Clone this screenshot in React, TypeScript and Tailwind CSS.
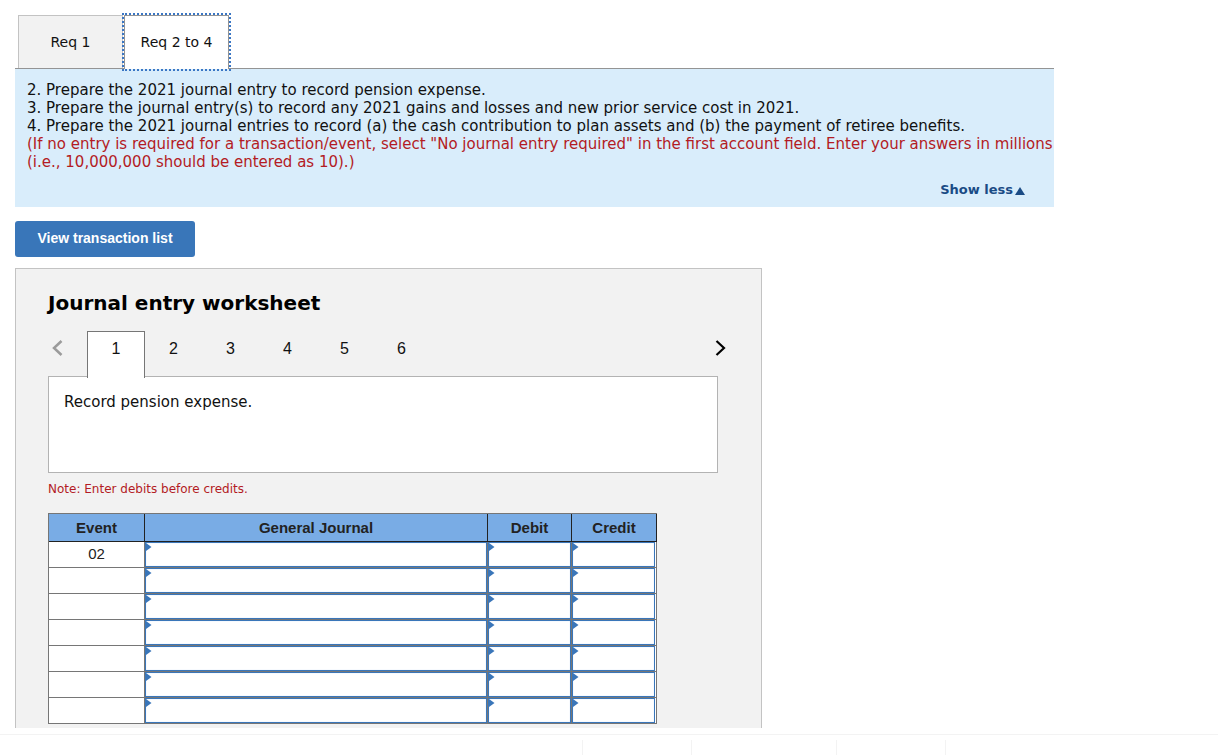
import { useState } from 'react';

const pages = [1, 2, 3, 4, 5, 6];

const rows = [
  { id: 1, event: '02' },
  { id: 2, event: '' },
  { id: 3, event: '' },
  { id: 4, event: '' },
  { id: 5, event: '' },
  { id: 6, event: '' },
  { id: 7, event: '' }
];

const EntryCell = ({ label }: { label: string }) => (
  <td className="relative border-r border-b border-[#767676] p-0 last:pr-px">
    <input
      type="text"
      aria-label={label}
      className="block h-[25px] w-full border border-[#3a76b9] bg-white px-2 text-sm outline-none shadow-[inset_0_0_1px_#a9cbee]"
    />
    <svg className="absolute left-0 top-px h-2 w-[7px]" viewBox="0 0 7 8" aria-hidden="true">
      <path d="M0 0H1L6.5 4L1 8H0Z" fill="#3a76b9" />
    </svg>
  </td>
);

const ReqTabs = () => (
  <div className="flex border-b border-[#949494] pl-[3px] pt-[15px]">
    <button
      type="button"
      className="h-[53px] w-[105px] border border-b-0 border-[#c3c3c3] bg-[#f2f2f2] text-sm"
    >
      Req 1
    </button>
    <button
      type="button"
      className="relative ml-px -mb-px h-[54px] w-[105px] border border-b-0 border-[#949494] bg-white pb-0.5 text-sm outline-2 outline-dotted outline-[#3a76c4]"
    >
      Req 2 to 4
    </button>
  </div>
);

const Instructions = () => (
  <div className="bg-[#d9edfb] pl-3 pt-3 pb-2 text-[15px] leading-[18px]">
    <p>2. Prepare the 2021 journal entry to record pension expense.</p>
    <p>3. Prepare the journal entry(s) to record any 2021 gains and losses and new prior service cost in 2021.</p>
    <p>
      4. Prepare the 2021 journal entries to record (a) the cash contribution to plan assets and (b) the payment of
      retiree benefits.
    </p>
    <p className="text-[#b31b24]">
      (If no entry is required for a transaction/event, select "No journal entry required" in the first account field.
      Enter your answers in millions (i.e., 10,000,000 should be entered as 10).)
    </p>
    <div className="mt-2.5 flex justify-end pr-[29px]">
      <button type="button" className="flex items-center gap-0.5 text-[13px] font-bold text-[#1a4b85]">
        Show less
        <svg className="mt-0.5 h-2 w-2.5" viewBox="0 0 10 8" aria-hidden="true">
          <path d="M5 0L10 8H0Z" fill="currentColor" />
        </svg>
      </button>
    </div>
  </div>
);

const Worksheet = () => {
  const [page, setPage] = useState(1);

  return (
    <section className="mt-[11px] max-w-[747px] border border-b-0 border-[#c3c3c3] bg-[#f2f2f2] pl-8 pr-[43px] pt-[22px] pb-1">
      <h2 className="text-xl font-bold leading-6 text-black">Journal entry worksheet</h2>

      <div className="mt-4 flex font-['Liberation_Sans',Arial,sans-serif]">
        <button type="button" aria-label="Previous" className="flex h-[34px] w-[39px] items-center pl-[3px] text-[#9b9b9b]">
          <svg className="h-[18px] w-3" viewBox="0 0 12 18" fill="none" aria-hidden="true">
            <path d="M10.5 2L3 9L10.5 16" stroke="currentColor" strokeWidth="2.5" />
          </svg>
        </button>
        {pages.map((n) => (
          <button
            key={n}
            type="button"
            onClick={() => setPage(n)}
            className={
              n === page
                ? 'relative -mb-0.5 h-[47px] w-[58px] border border-b-0 border-[#767676] bg-white pb-3 text-base'
                : 'h-[45px] w-[57px] pb-2.5 text-base'
            }
          >
            {n}
          </button>
        ))}
        <button
          type="button"
          aria-label="Next"
          className="-mr-[9px] ml-auto flex h-[34px] w-[39px] items-center justify-end"
        >
          <svg className="h-[18px] w-3" viewBox="0 0 12 18" fill="none" aria-hidden="true">
            <path d="M1.5 2L9 9L1.5 16" stroke="#000" strokeWidth="2.2" />
          </svg>
        </button>
      </div>

      <div className="h-[97px] border border-[#b3b3b3] bg-white p-[15px] text-[15px] leading-5">Record pension expense.</div>
      <p className="mt-2 text-xs leading-4 text-[#b31b24]">Note: Enter debits before credits.</p>

      <table className="mt-4 w-[609px] table-fixed border-separate border-spacing-0 border-l border-t border-[#767676] bg-white font-['Liberation_Sans',Arial,sans-serif] text-[15px] text-[#222]">
        <colgroup>
          <col className="w-24" />
          <col className="w-[343px]" />
          <col className="w-[84px]" />
          <col className="w-[85px]" />
        </colgroup>
        <thead>
          <tr className="h-7 bg-[#79ace5]">
            <th className="border-r border-b border-[#222] p-0 pt-px">Event</th>
            <th className="border-r border-b border-[#222] p-0 pt-px">General Journal</th>
            <th className="border-r border-b border-[#222] p-0 pt-px">Debit</th>
            <th className="border-r border-b border-[#222] p-0 pt-px">Credit</th>
          </tr>
        </thead>
        <tbody>
          {rows.map((row) => (
            <tr key={row.id} className="h-[26px]">
              <td className="border-r border-b border-[#767676] p-0 text-center">{row.event}</td>
              <EntryCell label={`General Journal, line ${row.id}`} />
              <EntryCell label={`Debit, line ${row.id}`} />
              <EntryCell label={`Credit, line ${row.id}`} />
            </tr>
          ))}
        </tbody>
      </table>
    </section>
  );
};

const App = () => {
  return (
    <div className="flex min-h-screen flex-col bg-white font-['Verdana','DejaVu_Sans',sans-serif] text-[#111]">
      <main className="px-[15px]">
        <div className="max-w-[1039px]">
          <ReqTabs />
          <Instructions />
        </div>
        <button
          type="button"
          className="mt-3.5 h-9 w-[180px] rounded-[3px] bg-[#3976b9] pb-0.5 font-['Liberation_Sans',Arial,sans-serif] text-sm font-bold text-white"
        >
          View transaction list
        </button>
        <Worksheet />
      </main>

      {/* Footer navigation dividers */}
      <footer className="mt-1.5 flex grow border-t border-[#f3f3f3] pl-[582px] pt-[5px]">
        <div className="w-[109px] border-l border-[#f3f3f3]" />
        <div className="w-[145px] border-l border-[#f3f3f3]" />
        <div className="w-[110px] border-x border-[#f3f3f3]" />
      </footer>
    </div>
  );
};

export default App;
